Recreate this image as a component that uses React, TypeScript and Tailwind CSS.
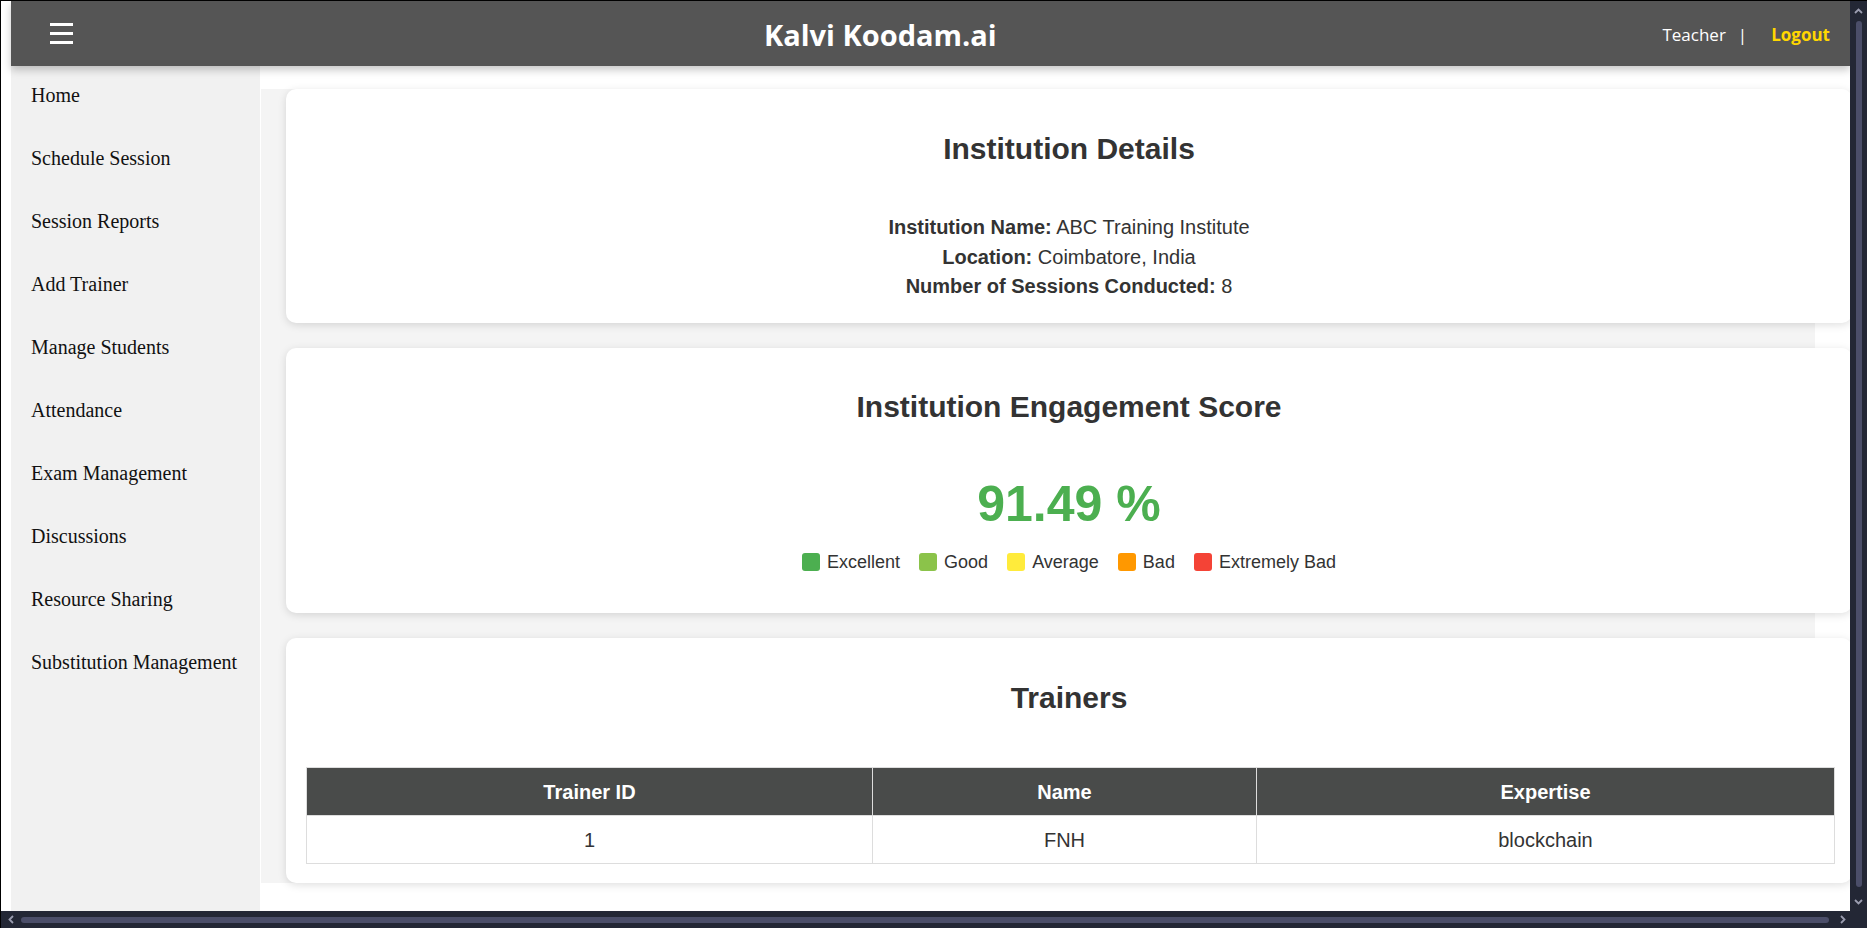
import React from 'react';

const menu = [
  'Home',
  'Schedule Session',
  'Session Reports',
  'Add Trainer',
  'Manage Students',
  'Attendance',
  'Exam Management',
  'Discussions',
  'Resource Sharing',
  'Substitution Management',
];

const legend = [
  { label: 'Excellent', color: 'bg-[#4caf50]' },
  { label: 'Good', color: 'bg-[#8bc34a]' },
  { label: 'Average', color: 'bg-[#ffeb3b]' },
  { label: 'Bad', color: 'bg-[#ff9800]' },
  { label: 'Extremely Bad', color: 'bg-[#f44336]' },
];

function Chevron({ dir }: { dir: 'up' | 'down' | 'left' | 'right' }) {
  const d = {
    up: 'M1 6 L4.5 2.5 L8 6',
    down: 'M1 3 L4.5 6.5 L8 3',
    left: 'M6 1 L2.5 4.5 L6 8',
    right: 'M3 1 L6.5 4.5 L3 8',
  }[dir];
  return (
    <svg width="9" height="9" viewBox="0 0 9 9">
      <path d={d} fill="none" stroke="#9b9db0" strokeWidth="1.8" />
    </svg>
  );
}

function Header() {
  return (
    <header className="relative z-10 h-[65px] bg-[#555555] flex items-center pl-[39px] pr-[20px] shadow-[0_4px_8px_rgba(0,0,0,0.22)] font-['Open_Sans',sans-serif]">
      <div className="w-[23px] flex flex-col gap-[6px]">
        <span className="h-[3px] bg-white block" />
        <span className="h-[3px] bg-white block" />
        <span className="h-[3px] bg-white block" />
      </div>
      <h1 className="text-white font-bold text-[29px] leading-none ml-[691px] mt-[2px]">Kalvi Koodam.ai</h1>
      <div className="ml-auto flex items-center text-[17px] leading-none mt-[1px]">
        <span className="text-white">Teacher</span>
        <span className="text-white ml-[12px]">|</span>
        <span className="text-[#ffd700] font-bold ml-[24px]">Logout</span>
      </div>
    </header>
  );
}

function Sidebar() {
  return (
    <nav className="w-[249px] shrink-0 bg-[#f1f1f1] font-['Liberation_Serif',serif] text-[20px] text-[#111]">
      {menu.map((m) => (
        <div key={m} className="h-[63px] pl-[20px] pt-[18px] leading-[23px] whitespace-nowrap">
          {m}
        </div>
      ))}
    </nav>
  );
}

function Card({ className, children }: { className: string; children: React.ReactNode }) {
  return (
    <section className={`w-[1566px] shrink-0 bg-white rounded-[10px] shadow-[0_2px_8px_rgba(0,0,0,0.13)] flex flex-col items-center pt-[42px] ${className}`}>
      {children}
    </section>
  );
}

export default function App() {
  return (
    <div className="w-[1867px] h-[928px] overflow-hidden flex flex-col bg-[#232735] border-t border-l border-black">
      <div className="flex h-[910px]">
        <div className="w-[1849px] h-[910px] bg-white pl-[10px] overflow-hidden flex flex-col">
          <Header />
          <div className="flex flex-1">
            <Sidebar />
            <main className="flex-1 pl-[1px] pt-[23px] bg-white font-['Liberation_Sans',Arial,sans-serif] text-[#333]">
              <div className="w-[1554px] bg-[#f4f4f4] px-[25px] flex flex-col gap-[25px]">
                <Card className="h-[234px]">
                  <h2 className="text-[30px] font-bold leading-[36px]">Institution Details</h2>
                  <div className="mt-[46px] text-[20px] leading-[29.5px] text-center">
                    <p><b>Institution Name:</b> ABC Training Institute</p>
                    <p><b>Location:</b> Coimbatore, India</p>
                    <p><b>Number of Sessions Conducted:</b> 8</p>
                  </div>
                </Card>
                <Card className="h-[265px]">
                  <h2 className="text-[30px] font-bold leading-[36px] -mt-[1px]">Institution Engagement Score</h2>
                  <div className="mt-[49px] text-[50px] font-bold leading-[60px] text-[#4caf50]">91.49 %</div>
                  <div className="mt-[16px] flex items-center gap-[19px] text-[18px] leading-[24px]">
                    {legend.map((l) => (
                      <div key={l.label} className="flex items-center gap-[7px]">
                        <span className={`w-[18px] h-[18px] rounded-[3px] ${l.color}`} />
                        <span>{l.label}</span>
                      </div>
                    ))}
                  </div>
                </Card>
                <Card className="h-[245px] !items-start">
                  <h2 className="self-center text-[30px] font-bold leading-[36px]">Trainers</h2>
                  <table className="ml-[20px] mt-[51px] w-[1528px] table-fixed border-collapse text-[20px]">
                    <colgroup>
                      <col className="w-[566px]" />
                      <col className="w-[384px]" />
                      <col className="w-[578px]" />
                    </colgroup>
                    <thead>
                      <tr className="bg-[#494b4a] text-white h-[48px]">
                        <th className="border border-[#ddd] font-bold">Trainer ID</th>
                        <th className="border border-[#ddd] font-bold">Name</th>
                        <th className="border border-[#ddd] font-bold">Expertise</th>
                      </tr>
                    </thead>
                    <tbody>
                      <tr className="h-[48px] text-center">
                        <td className="border border-[#ddd]">1</td>
                        <td className="border border-[#ddd]">FNH</td>
                        <td className="border border-[#ddd]">blockchain</td>
                      </tr>
                    </tbody>
                  </table>
                </Card>
              </div>
            </main>
          </div>
        </div>
        <div className="w-[17px] h-[910px] flex flex-col items-center">
          <div className="h-[20px] flex items-center justify-center"><Chevron dir="up" /></div>
          <div className="w-[6px] flex-1 rounded-full bg-[#4b4e69] mb-[4px]" />
          <div className="h-[20px] flex items-center justify-center"><Chevron dir="down" /></div>
        </div>
      </div>
      <div className="h-[17px] flex items-center">
        <div className="w-[20px] flex items-center justify-center"><Chevron dir="left" /></div>
        <div className="h-[6px] w-[1808px] rounded-full bg-[#4b4e69]" />
        <div className="w-[26px] flex items-center justify-center"><Chevron dir="right" /></div>
      </div>
    </div>
  );
}
